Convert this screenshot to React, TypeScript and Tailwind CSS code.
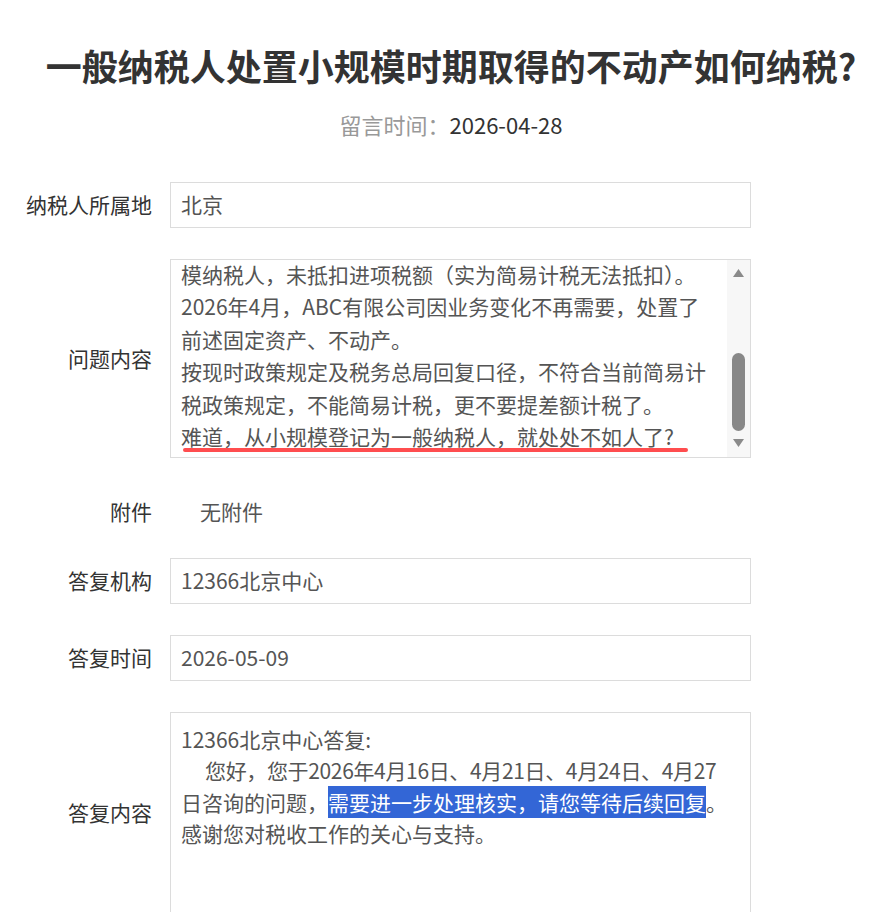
import React from "react";

const font = {
  fontFamily: '"Noto Sans CJK SC", "Noto Sans", sans-serif',
};

function Row({
  label,
  children,
  className = "",
}: {
  label: string;
  children: React.ReactNode;
  className?: string;
}) {
  return (
    <div className={`flex items-center ${className}`}>
      <div className="w-[152px] shrink-0 text-right text-[21px] text-[#333]">{label}</div>
      <div className="ml-[18px]">{children}</div>
    </div>
  );
}

function Field({ value }: { value: string }) {
  return (
    <div className="w-[581px] h-[46px] border border-[#dcdcdc] bg-white flex items-center pl-[10px] text-[21px] text-[#555]">
      {value}
    </div>
  );
}

export default function App() {
  const qLines = [
    "模纳税人，未抵扣进项税额（实为简易计税无法抵扣）。",
    "2026年4月，ABC有限公司因业务变化不再需要，处置了",
    "前述固定资产、不动产。",
    "按现时政策规定及税务总局回复口径，不符合当前简易计",
    "税政策规定，不能简易计税，更不要提差额计税了。",
    "难道，从小规模登记为一般纳税人，就处处不如人了?",
  ];
  return (
    <div style={font} className="w-[876px] h-[912px] overflow-hidden bg-white text-[#333]">
      <h1 className="pt-[42px] pl-[26px] text-center whitespace-nowrap text-[36px] leading-[46px] font-bold text-[#333]">
        一般纳税人处置小规模时期取得的不动产如何纳税?
      </h1>
      <div className="mt-[20px] pl-[26px] text-center text-[22px] leading-[32px] whitespace-nowrap">
        <span className="text-[#999]">留言时间：</span>
        <span className="text-[#333]">2026-04-28</span>
      </div>

      <Row label="纳税人所属地" className="mt-[42px]">
        <Field value="北京" />
      </Row>

      <Row label="问题内容" className="mt-[31px]">
        <div className="relative w-[581px] h-[199px] border border-[#dcdcdc] bg-white overflow-hidden">
          <div className="pl-[10px] -mt-[2px] text-[21px] leading-[32.4px] text-[#555] whitespace-nowrap">
            {qLines.map((l, i) => (
              <div key={i}>{l}</div>
            ))}
          </div>
          <div className="absolute left-[12px] top-[188px] w-[505px] h-[4px] rounded-full bg-[#ff4d4f]" />
          <div className="absolute right-0 top-0 w-[23px] h-full bg-[#f7f7f7]">
            <svg className="absolute left-[6px] top-[9px]" width="11" height="8" viewBox="0 0 11 8">
              <polygon points="5.5,0 11,8 0,8" fill="#8a8a8a" />
            </svg>
            <div className="absolute left-[5px] top-[93px] w-[13px] h-[78px] rounded-full bg-[#888]" />
            <svg className="absolute left-[6px] top-[179px]" width="11" height="8" viewBox="0 0 11 8">
              <polygon points="0,0 11,0 5.5,8" fill="#8a8a8a" />
            </svg>
          </div>
        </div>
      </Row>

      <Row label="附件" className="mt-[31px] h-[46px]">
        <div className="pl-[30px] text-[21px] text-[#555]">无附件</div>
      </Row>

      <Row label="答复机构" className="mt-[23px]">
        <Field value="12366北京中心" />
      </Row>

      <Row label="答复时间" className="mt-[31px]">
        <Field value="2026-05-09" />
      </Row>

      <Row label="答复内容" className="mt-[31px]">
        <div className="w-[581px] h-[201px] border border-[#dcdcdc] bg-white pt-[11px] pl-[10px] text-[21px] leading-[31px] text-[#555] whitespace-nowrap">
          <div>12366北京中心答复:</div>
          <div className="pl-[24px] tracking-[-0.35px]">您好，您于2026年4月16日、4月21日、4月24日、4月27</div>
          <div>
            日咨询的问题，
            <span className="bg-[#3366d6] text-white inline-block leading-[32px]">需要进一步处理核实，请您等待后续回复</span>
            。
          </div>
          <div>感谢您对税收工作的关心与支持。</div>
        </div>
      </Row>
    </div>
  );
}
